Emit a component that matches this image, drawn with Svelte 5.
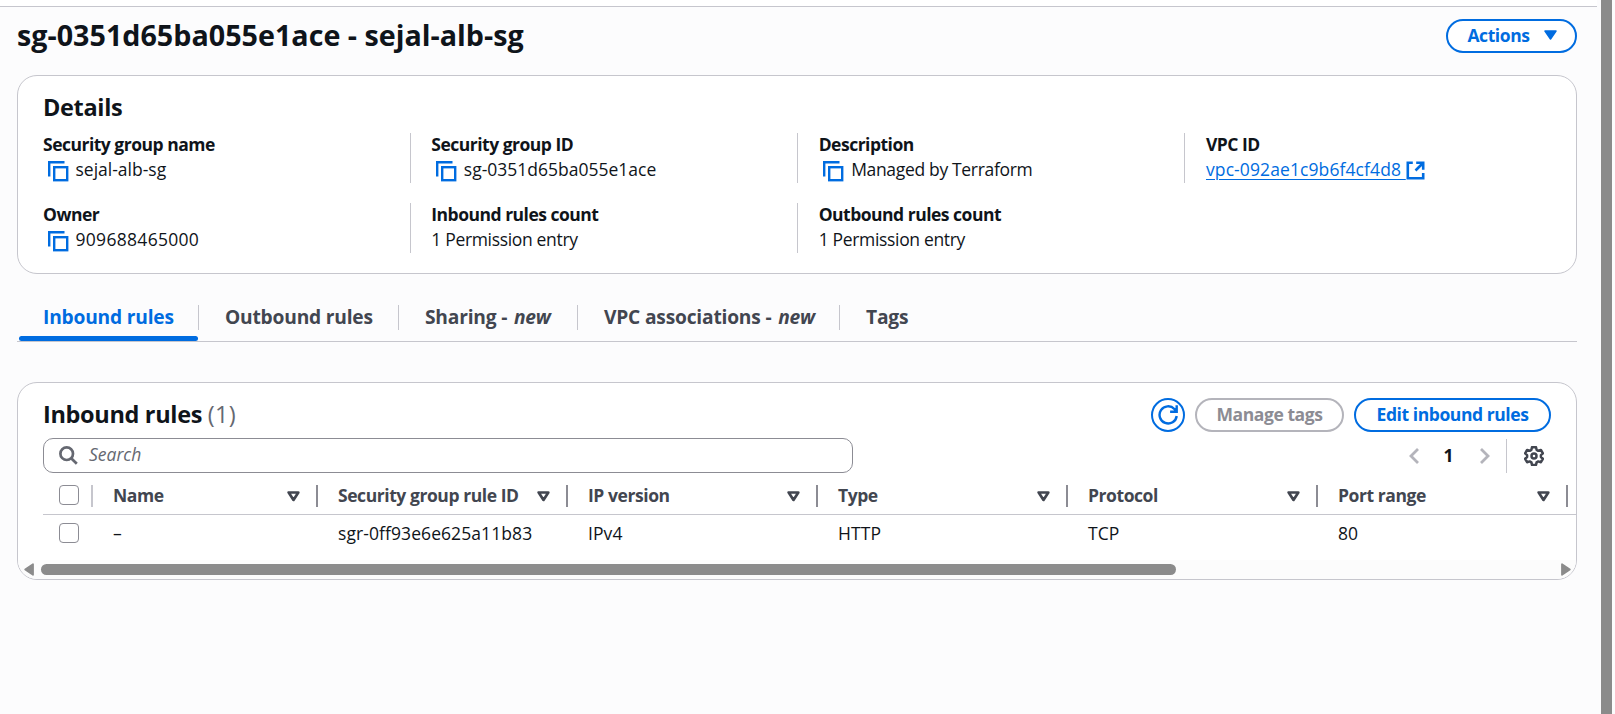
<script>
  const details = [
    { label: 'Security group name', value: 'sejal-alb-sg', copy: true },
    { label: 'Security group ID', value: 'sg-0351d65ba055e1ace', copy: true },
    { label: 'Description', value: 'Managed by Terraform', copy: true, words: true },
    { label: 'VPC ID', value: 'vpc-092ae1c9b6f4cf4d8', link: true },
    { label: 'Owner', value: '909688465000', copy: true, digits: true },
    { label: 'Inbound rules count', value: '1 Permission entry', words: true },
    { label: 'Outbound rules count', value: '1 Permission entry', words: true }
  ];
  const tabs = [
    { text: 'Inbound rules', width: 182, active: true },
    { text: 'Outbound rules', width: 200 },
    { text: 'Sharing - ', isNew: true, width: 179 },
    { text: 'VPC associations - ', isNew: true, width: 262 },
    { text: 'Tags', width: 96 }
  ];
  const columns = [
    { title: 'Name', value: '–' },
    { title: 'Security group rule ID', value: 'sgr-0ff93e6e625a11b83' },
    { title: 'IP version', value: 'IPv4' },
    { title: 'Type', value: 'HTTP' },
    { title: 'Protocol', value: 'TCP' },
    { title: 'Port range', value: '80' }
  ];
</script>

<div class="page">
  <main>
    <div class="topbar"></div>
    <header>
      <h1>sg-0351d65ba055e1ace - sejal-alb-sg</h1>
      <button class="btn actions">
        <span>Actions</span>
        <svg width="13" height="10" viewBox="0 0 13 10"><path d="M1 1h11L6.500 9z" fill="#006ce0" stroke="#006ce0" stroke-width="1.500" stroke-linejoin="round" /></svg>
      </button>
    </header>

    <section class="card details">
      <h2>Details</h2>
      <div class="grid">
        {#each details as d, i}
          <div class="cell" class:ruled={i % 4 !== 0}>
            <div class="label">{d.label}</div>
            <div class="value" class:words={d.words} class:digits={d.digits}>
              {#if d.copy}
                <svg class="copy" width="21" height="21" viewBox="0 0 21 21" fill="none" stroke="#006ce0" stroke-width="2.400"><path d="M1.200 15.500V1.200h15.300" /><rect x="6.200" y="6.200" width="13" height="13" /></svg>
              {/if}
              {#if d.link}
                <a href="#vpc">{d.value}&nbsp;</a>
                <svg class="ext" width="19" height="19" viewBox="0 0 19 19" fill="none" stroke="#006ce0" stroke-width="2.600"><path d="M6.800 1.800H1.800v15.400h15.400v-5.200M10.200 1.800h7v7M17 2l-7.500 7.500" /></svg>
              {:else}
                <span>{d.value}</span>
              {/if}
            </div>
          </div>
        {/each}
      </div>
    </section>

    <nav>
      {#each tabs as t}
        <div class="tab" class:active={t.active} style="width:{t.width}px">
          <span>{t.text}{#if t.isNew}<em>new</em>{/if}</span>
        </div>
      {/each}
    </nav>

    <section class="card rules">
      <div class="heading">
        <h2>Inbound rules <span class="count">(1)</span></h2>
        <div class="buttons">
          <button class="btn round" aria-label="Refresh">
            <svg width="20" height="20" viewBox="0 0 20 20" fill="none" stroke="#006ce0" stroke-width="2.400"><path d="M18.700 11a8.600 8.600 0 1 1-2.300-7l1.800 2.400M18.700 .2v6.600h-6.600" /></svg>
          </button>
          <button class="btn manage" disabled><span>Manage tags</span></button>
          <button class="btn edit"><span>Edit inbound rules</span></button>
        </div>
      </div>
      <div class="tools">
        <div class="search">
          <svg width="19" height="19" viewBox="0 0 19 19" fill="none" stroke="#656871" stroke-width="2.700"><circle cx="7.700" cy="7.700" r="6.300" /><path d="M12.200 12.200l5.600 5.600" /></svg>
          <span>Search</span>
        </div>
        <div class="pager">
          <svg width="10" height="16" viewBox="0 0 10 16" fill="none" stroke="#b4b4bb" stroke-width="2.800"><path d="M9 1L2 8l7 7" /></svg>
          <b>1</b>
          <svg width="10" height="16" viewBox="0 0 10 16" fill="none" stroke="#b4b4bb" stroke-width="2.800"><path d="M1 1l7 7-7 7" /></svg>
          <i class="rule"></i>
          <svg width="20" height="20" viewBox="0 0 20 20" fill="none" stroke="#424650" stroke-width="2.500" stroke-linejoin="round"><path d="M8 1.200h4l.6 2.600 1.700 1 2.600-.8 2 3.400-2 1.700v2l2 1.700-2 3.400-2.600-.8-1.700 1-.6 2.500H8l-.6-2.500-1.700-1-2.600.8-2-3.400 2-1.700v-2l-2-1.700 2-3.400 2.600.8 1.700-1z" /><circle cx="10" cy="10" r="2.500" /></svg>
        </div>
      </div>
      <div class="table">
        <div class="row head">
          <div class="check"><i class="box"></i></div>
          {#each columns as c}
            <div class="col">
              <span>{c.title}</span>
              <svg width="13" height="11" viewBox="0 0 13 11" fill="none" stroke="#424650" stroke-width="2.700" stroke-linejoin="round"><path d="M1.700 1.500h9.600L6.500 8.900z" /></svg>
            </div>
          {/each}
        </div>
        <div class="row">
          <div class="check"><i class="box"></i></div>
          {#each columns as c}
            <div class="col"><span>{c.value}</span></div>
          {/each}
        </div>
      </div>
      <div class="hscroll">
        <svg width="10" height="13" viewBox="0 0 10 13"><path d="M9 1.200v10.600L1.200 6.500z" fill="#8b8b8b" stroke="#8b8b8b" stroke-width="1.800" stroke-linejoin="round" /></svg>
        <div class="track"><div class="thumb"></div></div>
        <svg width="10" height="13" viewBox="0 0 10 13"><path d="M1 1.200v10.600l7.800-5.300z" fill="#8b8b8b" stroke="#8b8b8b" stroke-width="1.800" stroke-linejoin="round" /></svg>
      </div>
    </section>
  </main>
  <div class="vscroll"><div></div></div>
</div>

<style>
  :global(body) { margin: 0; background: #fcfcfd; overflow: hidden; }
  * { box-sizing: border-box; }
  .page { display: flex; width: 1615px; height: 714px; background: #fcfcfd; color: #0f141a; font: 17.5px/25px "Open Sans", "Noto Sans", sans-serif; white-space: nowrap; overflow: hidden; }
  main { width: 1597px; flex: none; }
  .topbar { height: 7px; background: #fff; border-bottom: 1px solid #c6c6cd; }
  header { display: flex; justify-content: space-between; margin: 0 20px 0 17px; height: 68px; padding-top: 12px; }
  h1 { margin: -1px 0 0; font-size: 28.7px; line-height: 34px; font-weight: 700; }
  h2 { margin: 0; font-size: 23.5px; line-height: 30px; font-weight: 700; letter-spacing: -0.33px; }
  .btn { display: flex; align-items: center; justify-content: center; height: 34px; padding: 0 0 2px; border: 2px solid #006ce0; border-radius: 17px; background: #fff; color: #006ce0; font: inherit; font-weight: 700; letter-spacing: -0.43px; }
  .actions { width: 131px; gap: 14px; padding-left: 1px; }
  .card { margin: 0 20px 0 17px; background: #fff; border: 1px solid #c6c6cd; border-radius: 20px; }
  .details { height: 199px; padding: 16px 25px 0; }
  .grid { display: grid; grid-template-columns: repeat(4, 387.33px); row-gap: 20px; margin-top: 11px; }
  .cell { height: 50px; }
  .ruled { margin-left: -20.500px; padding-left: 20.500px; border-left: 1px solid #c6c6cd; }
  .label { font-weight: 700; letter-spacing: -0.5px; margin-top: -1px; }
  .value { display: flex; align-items: center; height: 25px; }
  .words { letter-spacing: -0.33px; }
  .digits { letter-spacing: 0.3px; }
  .copy { margin: 4px 7px 0 4.5px; }
  .ext { margin: 2px 0 0; }
  a { color: #006ce0; letter-spacing: 0.1px; text-underline-offset: 3px; text-decoration-thickness: 1px; }
  nav { display: flex; height: 68px; margin: 0 20px 0 17px; padding-top: 31px; border-bottom: 1px solid #c6c6cd; }
  .tab { height: 25px; flex: none; display: flex; align-items: center; padding-left: 26px; border-right: 1px solid #c6c6cd; font-size: 19.200px; font-weight: 700; letter-spacing: -0.2px; color: #424650; }
  .tab span { margin-top: -2px; }
  .tab em { margin-left: 2px; }
  .tab:last-child { border: 0; }
  .active { color: #006ce0; position: relative; }
  .active::after { content: ''; position: absolute; left: 2px; right: 0; bottom: -11px; height: 5px; border-radius: 3px; background: #006ce0; }
  .rules { margin-top: 40px; height: 198px; overflow: hidden; }
  .heading { display: flex; justify-content: space-between; padding: 15px 25px 0; height: 55px; }
  .heading h2 { margin-top: 1px; }
  .count { font-weight: 400; color: #656871; letter-spacing: 0.2px; }
  .buttons { display: flex; gap: 10px; }
  .round { width: 34px; padding: 0; }
  .manage { width: 149px; border-color: #b4b4bb; color: #8c8c94; }
  .edit { width: 197px; }
  .tools { display: flex; justify-content: space-between; padding: 0 32px 0 25px; height: 35px; }
  .search { display: flex; align-items: center; width: 810px; height: 35px; border: 1px solid #8c8c94; border-radius: 10px; padding-left: 15px; gap: 11px; color: #656871; font-style: italic; }
  .search span { margin-top: -2px; }
  .pager { display: flex; align-items: center; }
  .pager b { width: 61px; padding: 0 2px 1px 0; text-align: center; }
  .rule { width: 1px; height: 34px; background: #c6c6cd; margin: 0 17px 0 16px; }
  .table { margin-left: 25px; overflow: hidden; height: 87px; }
  .row { display: flex; height: 38px; align-items: center; letter-spacing: 0.08px; }
  .head { height: 42px; padding-top: 5px; border-bottom: 1px solid #c6c6cd; color: #424650; font-weight: 700; letter-spacing: -0.43px; }
  .check { width: 50px; height: 22px; padding-left: 16px; flex: none; }
  .head .check { border-right: 2px solid #c6c6cd; }
  .box { display: block; width: 20px; height: 20px; border: 1px solid #8c8c94; border-radius: 4px; background: #fff; }
  .col { flex: none; width: 250px; padding: 0 16px 0 20px; display: flex; justify-content: space-between; align-items: center; height: 22px; }
  .col:nth-child(2) { width: 225px; }
  .col span { margin-top: -1px; }
  .head .col { border-right: 2px solid #8c8c94; }
  .hscroll { display: flex; align-items: center; height: 19px; background: #fcfcfc; padding: 0 5px 0 6px; }
  .track { flex: 1; margin: 0 7px; }
  .thumb { width: 1135px; height: 11px; border-radius: 6px; background: #8b8b8b; }
  .vscroll { width: 18px; padding-left: 4px; }
  .vscroll div { width: 11px; height: 714px; background: #8b8b8b; }
</style>
